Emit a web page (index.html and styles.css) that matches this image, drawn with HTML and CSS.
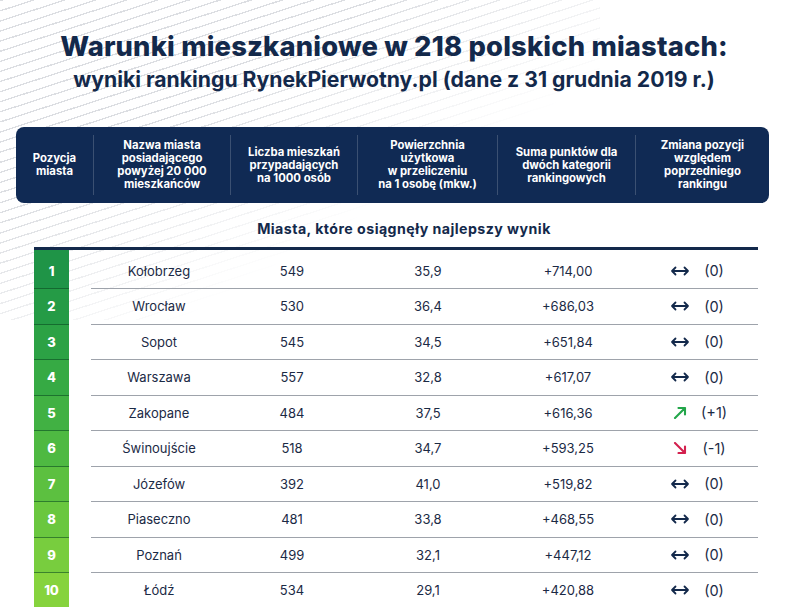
FILE: index.html
```html
<!DOCTYPE html>
<html lang="pl">
<head>
<meta charset="utf-8">
<title>Warunki mieszkaniowe</title>
<link rel="stylesheet" href="styles.css">
</head>
<body>
<div class="page">
  <header class="titles">
    <h1 class="t1">Warunki mieszkaniowe w 218 polskich miastach:</h1>
    <h2 class="t2">wyniki rankingu RynekPierwotny.pl (dane z 31 grudnia 2019 r.)</h2>
  </header>

  <div class="head">
    <div class="hc c1">Pozycja<br>miasta</div>
    <div class="hc c2">Nazwa miasta<br>posiadającego<br>powyżej 20 000<br>mieszkańców</div>
    <div class="hc c3">Liczba mieszkań<br>przypadających<br>na 1000 osób</div>
    <div class="hc c4">Powierzchnia<br>użytkowa<br>w przeliczeniu<br>na 1 osobę (mkw.)</div>
    <div class="hc c5">Suma punktów dla<br>dwóch kategorii<br>rankingowych</div>
    <div class="hc c6">Zmiana pozycji<br>względem<br>poprzedniego<br>rankingu</div>
  </div>

  <div class="section">Miasta, które osiągnęły najlepszy wynik</div>

  <div class="table">
    <div class="row"><div class="pos g1">1</div><div class="cells"><span>Kołobrzeg</span><span>549</span><span>35,9</span><span>+714,00</span><span class="chg"><svg class="ar" viewBox="0 0 20 12"><path d="M2 6H18M5.5 2.5L2 6L5.5 9.5M14.5 2.5L18 6L14.5 9.5"/></svg><span>(0)</span></span></div></div>
    <div class="row"><div class="pos g2">2</div><div class="cells"><span>Wrocław</span><span>530</span><span>36,4</span><span>+686,03</span><span class="chg"><svg class="ar" viewBox="0 0 20 12"><path d="M2 6H18M5.5 2.5L2 6L5.5 9.5M14.5 2.5L18 6L14.5 9.5"/></svg><span>(0)</span></span></div></div>
    <div class="row"><div class="pos g3">3</div><div class="cells"><span>Sopot</span><span>545</span><span>34,5</span><span>+651,84</span><span class="chg"><svg class="ar" viewBox="0 0 20 12"><path d="M2 6H18M5.5 2.5L2 6L5.5 9.5M14.5 2.5L18 6L14.5 9.5"/></svg><span>(0)</span></span></div></div>
    <div class="row"><div class="pos g4">4</div><div class="cells"><span>Warszawa</span><span>557</span><span>32,8</span><span>+617,07</span><span class="chg"><svg class="ar" viewBox="0 0 20 12"><path d="M2 6H18M5.5 2.5L2 6L5.5 9.5M14.5 2.5L18 6L14.5 9.5"/></svg><span>(0)</span></span></div></div>
    <div class="row"><div class="pos g5">5</div><div class="cells"><span>Zakopane</span><span>484</span><span>37,5</span><span>+616,36</span><span class="chg"><svg class="ar up" viewBox="0 0 20 12"><path d="M5 11L15 1M8.5 1H15V7.5"/></svg><span>(+1)</span></span></div></div>
    <div class="row"><div class="pos g6">6</div><div class="cells"><span>Świnoujście</span><span>518</span><span>34,7</span><span>+593,25</span><span class="chg"><svg class="ar down" viewBox="0 0 20 12"><path d="M5 1L15 11M15 4.5V11H8.5"/></svg><span>(-1)</span></span></div></div>
    <div class="row"><div class="pos g7">7</div><div class="cells"><span>Józefów</span><span>392</span><span>41,0</span><span>+519,82</span><span class="chg"><svg class="ar" viewBox="0 0 20 12"><path d="M2 6H18M5.5 2.5L2 6L5.5 9.5M14.5 2.5L18 6L14.5 9.5"/></svg><span>(0)</span></span></div></div>
    <div class="row"><div class="pos g8">8</div><div class="cells"><span>Piaseczno</span><span>481</span><span>33,8</span><span>+468,55</span><span class="chg"><svg class="ar" viewBox="0 0 20 12"><path d="M2 6H18M5.5 2.5L2 6L5.5 9.5M14.5 2.5L18 6L14.5 9.5"/></svg><span>(0)</span></span></div></div>
    <div class="row"><div class="pos g9">9</div><div class="cells"><span>Poznań</span><span>499</span><span>32,1</span><span>+447,12</span><span class="chg"><svg class="ar" viewBox="0 0 20 12"><path d="M2 6H18M5.5 2.5L2 6L5.5 9.5M14.5 2.5L18 6L14.5 9.5"/></svg><span>(0)</span></span></div></div>
    <div class="row"><div class="pos g10">10</div><div class="cells"><span>Łódź</span><span>534</span><span>29,1</span><span>+420,88</span><span class="chg"><svg class="ar" viewBox="0 0 20 12"><path d="M2 6H18M5.5 2.5L2 6L5.5 9.5M14.5 2.5L18 6L14.5 9.5"/></svg><span>(0)</span></span></div></div>
  </div>
</div>
</body>
</html>
```
FILE: styles.css
```css
* { box-sizing: border-box; margin: 0; padding: 0; }
html, body { width: 788px; height: 607px; overflow: hidden; background: #fff; }
body {
  font-family: "Inter", "Noto Sans", sans-serif;
  color: #13294b;
  position: relative;
}
body::before {
  content: "";
  position: absolute;
  left: 0; top: 0;
  width: 600px; height: 320px;
  background: repeating-linear-gradient(-18deg, transparent 0 8.3px, #dcdee2 8.3px 9.6px);
  -webkit-mask-image: linear-gradient(150deg, #000 0%, #000 32%, transparent 64%);
  mask-image: linear-gradient(150deg, #000 0%, #000 32%, transparent 64%);
  z-index: 0;
}
.page { position: relative; z-index: 1; padding-top: 31px; }

.titles { text-align: center; }
.t1 {
  font-size: 27.3px; font-weight: 800; line-height: 32px;
  letter-spacing: 0.2px;
  color: #13294b;
}
.t2 {
  font-size: 21.2px; font-weight: 700; line-height: 26px;
  margin-top: 3px;
  color: #13294b;
}

.head {
  margin: 35px 19px 0 16px;
  height: 76px;
  background: #102a54;
  border-radius: 8px;
  display: grid;
  grid-template-columns: 77px 137px 127px 140px 138px 1fr;
  align-items: center;
}
.hc {
  color: #fff;
  font-size: 11.3px;
  font-weight: 700;
  line-height: 13px;
  text-align: center;
  height: 60px;
  display: flex; align-items: center; justify-content: center;
  border-left: 1px solid rgba(255,255,255,0.18);
}
.hc.c1 { border-left: none; }

.section {
  text-align: center;
  font-size: 14.2px;
  font-weight: 700;
  letter-spacing: 0.45px;
  margin: 17px 0 0 20px;
  line-height: 18px;
}

.table {
  margin: 9px 30px 0 34px;
  border-top: 3px solid #13294b;
}
.row {
  display: grid;
  grid-template-columns: 35px 1fr;
  column-gap: 22px;
  height: 35.5px;
}
.row:first-child { height: 39px; }
.pos {
  color: #fff; font-weight: 800; font-size: 13px;
  display: flex; align-items: center; justify-content: center;
  border-bottom: 1px solid rgba(10,70,30,0.55);
}
.row:first-child .pos, .row:first-child .cells { padding-top: 3px; }
.cells {
  display: grid;
  grid-template-columns: 136px 130px 142px 138px 1fr;
  align-items: center;
  border-bottom: 1.5px solid #9ea3ab;
  font-size: 13px;
  color: #1b2a45;
}
.cells > span { text-align: center; }
.chg { display: flex; align-items: center; justify-content: center; gap: 11px; padding-left: 2px; font-size: 14.5px; }
.chg > span { width: 26px; text-align: center; }
.ar { width: 20px; height: 12px; fill: none; stroke: #13294b; stroke-width: 1.8; stroke-linecap: round; stroke-linejoin: round; }
.ar.up { stroke: #23a64a; stroke-width: 2.1; }
.ar.down { stroke: #d3204e; stroke-width: 2.1; }

.g1 { background: #1f9447; }
.g2 { background: #259b46; }
.g3 { background: #2ca245; }
.g4 { background: #36aa44; }
.g5 { background: #41b143; }
.g6 { background: #4eb942; }
.g7 { background: #5cc040; }
.g8 { background: #6ac73f; }
.g9 { background: #78cd3e; }
.g10 { background: #86d33d; }
```
